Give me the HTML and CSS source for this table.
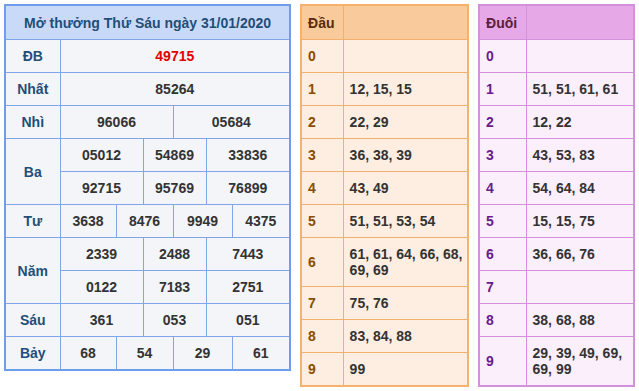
FILE: index.html
```html
<!DOCTYPE html>
<html lang="vi">
<head>
    <meta charset="UTF-8">
    <meta name="viewport" content="width=device-width, initial-scale=1.0">
    <title>Kết quả xổ số Thứ Sáu 31/01/2020</title>
    <link rel="stylesheet" href="styles.css">
</head>
<body>
    <div class="result-wrap">
        <!-- Bảng kết quả -->
        <table class="kq-table">
            <colgroup>
                <col style="width:55px">
                <col style="width:56px">
                <col style="width:27px">
                <col style="width:30px">
                <col style="width:33px">
                <col style="width:26px">
                <col style="width:58px">
            </colgroup>
            <tr class="kq-head">
                <th colspan="7">Mở thưởng Thứ Sáu ngày 31/01/2020</th>
            </tr>
            <tr>
                <td class="prize">ĐB</td>
                <td colspan="6" class="special">49715</td>
            </tr>
            <tr>
                <td class="prize">Nhất</td>
                <td colspan="6">85264</td>
            </tr>
            <tr>
                <td class="prize">Nhì</td>
                <td colspan="3">96066</td>
                <td colspan="3">05684</td>
            </tr>
            <tr>
                <td class="prize" rowspan="2">Ba</td>
                <td colspan="2">05012</td>
                <td colspan="2">54869</td>
                <td colspan="2">33836</td>
            </tr>
            <tr>
                <td colspan="2">92715</td>
                <td colspan="2">95769</td>
                <td colspan="2">76899</td>
            </tr>
            <tr>
                <td class="prize">Tư</td>
                <td>3638</td>
                <td colspan="2">8476</td>
                <td colspan="2">9949</td>
                <td>4375</td>
            </tr>
            <tr>
                <td class="prize" rowspan="2">Năm</td>
                <td colspan="2">2339</td>
                <td colspan="2">2488</td>
                <td colspan="2">7443</td>
            </tr>
            <tr>
                <td colspan="2">0122</td>
                <td colspan="2">7183</td>
                <td colspan="2">2751</td>
            </tr>
            <tr>
                <td class="prize">Sáu</td>
                <td colspan="2">361</td>
                <td colspan="2">053</td>
                <td colspan="2">051</td>
            </tr>
            <tr>
                <td class="prize">Bảy</td>
                <td>68</td>
                <td colspan="2">54</td>
                <td colspan="2">29</td>
                <td>61</td>
            </tr>
        </table>

        <!-- Bảng đầu -->
        <table class="loto-table dau">
            <colgroup>
                <col style="width:42px">
                <col>
            </colgroup>
            <tr class="loto-head"><th>Đầu</th><th></th></tr>
            <tr><td class="num">0</td><td></td></tr>
            <tr><td class="num">1</td><td>12, 15, 15</td></tr>
            <tr><td class="num">2</td><td>22, 29</td></tr>
            <tr><td class="num">3</td><td>36, 38, 39</td></tr>
            <tr><td class="num">4</td><td>43, 49</td></tr>
            <tr><td class="num">5</td><td>51, 51, 53, 54</td></tr>
            <tr><td class="num">6</td><td>61, 61, 64, 66, 68, 69, 69</td></tr>
            <tr><td class="num">7</td><td>75, 76</td></tr>
            <tr><td class="num">8</td><td>83, 84, 88</td></tr>
            <tr><td class="num">9</td><td>99</td></tr>
        </table>

        <!-- Bảng đuôi -->
        <table class="loto-table duoi">
            <colgroup>
                <col style="width:47px">
                <col>
            </colgroup>
            <tr class="loto-head"><th>Đuôi</th><th></th></tr>
            <tr><td class="num">0</td><td></td></tr>
            <tr><td class="num">1</td><td>51, 51, 61, 61</td></tr>
            <tr><td class="num">2</td><td>12, 22</td></tr>
            <tr><td class="num">3</td><td>43, 53, 83</td></tr>
            <tr><td class="num">4</td><td>54, 64, 84</td></tr>
            <tr><td class="num">5</td><td>15, 15, 75</td></tr>
            <tr><td class="num">6</td><td>36, 66, 76</td></tr>
            <tr><td class="num">7</td><td></td></tr>
            <tr><td class="num">8</td><td>38, 68, 88</td></tr>
            <tr><td class="num">9</td><td>29, 39, 49, 69, 69, 99</td></tr>
        </table>
    </div>
</body>
</html>
```

FILE: styles.css
```css
body {
    margin: 0;
    padding: 4px;
    background: #fff;
    font-family: "Liberation Sans", Arial, sans-serif;
    font-size: 14px;
    font-weight: bold;
    color: #333;
}

.result-wrap {
    display: flex;
    align-items: flex-start;
    gap: 9px;
}

table {
    border-collapse: collapse;
    table-layout: fixed;
}

td, th {
    padding: 0;
    line-height: 16px;
}

/* ket qua */
.kq-table {
    width: 285px;
    border: 2px solid #6d9eeb;
    background: #f3f5f9;
}

.kq-table td {
    height: 32px;
    border: 1px solid #7ea6e8;
    text-align: center;
}

.kq-head th {
    height: 33px;
    background: #c9daf8;
    color: #1f4e79;
    border-bottom: 1px solid #7ea6e8;
    font-size: 14px;
}

.kq-table .prize {
    color: #1f4e79;
}

.kq-table .special {
    color: #e00000;
}

/* loto */
.loto-table td, .loto-table th {
    text-align: left;
    padding: 8px 2px 8px 6px;
    vertical-align: middle;
}

.loto-table .loto-head th {
    height: 33px;
    padding-top: 0;
    padding-bottom: 0;
}

.dau {
    width: 169px;
    border: 2px solid #f6b26b;
    background: #fdeee1;
}

.dau td, .dau th {
    border: 1px solid #f3b06b;
}

.dau .loto-head th {
    background: #f9cb9c;
    color: #5b2c06;
}

.dau .num {
    color: #8a4d00;
}

.duoi {
    width: 157px;
    border: 2px solid #d490dc;
    background: #fbeffb;
}

.duoi td, .duoi th {
    border: 1px solid #d490dc;
}

.duoi .loto-head th {
    background: #e6a8e6;
    color: #5a1f3c;
}

.duoi .num {
    color: #6a1b8a;
}
```
